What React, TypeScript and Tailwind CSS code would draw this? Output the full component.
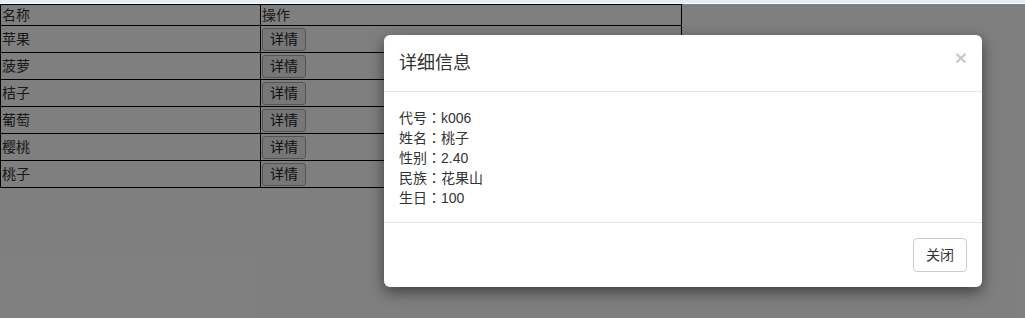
import React from "react";

const fruits = ["苹果", "菠萝", "桔子", "葡萄", "樱桃", "桃子"];

const details = [
  { label: "代号", value: "k006" },
  { label: "姓名", value: "桃子" },
  { label: "性别", value: "2.40" },
  { label: "民族", value: "花果山" },
  { label: "生日", value: "100" },
];

const font = "font-['Liberation_Sans','Noto_Sans_CJK_SC',sans-serif]";

export default function App() {
  return (
    <div className={`w-[1025px] h-[318px] overflow-hidden bg-white text-[14px] leading-[20px] text-[#333] ${font}`}>
      {/* browser strip */}
      <div className="h-[3px] bg-[#e3ebf3]" />

      <div className="relative h-[315px]">
        {/* Fruit table */}
        <table className="border-collapse w-[682px] mt-[1px] bg-white">
          <thead>
            <tr>
              <th className="border border-black p-0 pl-[1px] h-[21px] w-[260px] text-left font-normal">名称</th>
              <th className="border border-black p-0 pl-[1px] h-[21px] text-left font-normal">操作</th>
            </tr>
          </thead>
          <tbody>
            {fruits.map((name) => (
              <tr key={name}>
                <td className="border border-black p-0 pl-[1px] h-[27px]">{name}</td>
                <td className="border border-black p-0 pl-[1px] h-[27px]">
                  <button className="flex items-center justify-center w-[44px] h-[23px] border border-[#a9a9a9] rounded-[3px] bg-[#efefef] text-[14px] text-[#222]">
                    详情
                  </button>
                </td>
              </tr>
            ))}
          </tbody>
        </table>

        {/* Backdrop */}
        <div className="absolute inset-0 bg-black/50" />

        {/* Modal */}
        <div className="absolute left-[384px] top-[31px] w-[598px] bg-white rounded-[6px] shadow-[0_5px_15px_rgba(0,0,0,0.5)]">
          <div className="flex items-start justify-between p-[15px] border-b border-[#e5e5e5]">
            <h4 className="text-[18px] leading-[26px] text-[#333]">详细信息</h4>
            <span className="mt-[-5px] text-[21px] leading-[26px] font-bold text-black opacity-20">×</span>
          </div>
          <div className="p-[15px]">
            {details.map((d) => (
              <div key={d.label} className="h-[20px]">
                {d.label}
                <span className="font-['Noto_Sans_CJK_TC',sans-serif]">：</span>
                {d.value}
              </div>
            ))}
          </div>
          <div className="flex justify-end p-[15px] border-t border-[#e5e5e5]">
            <button className="h-[34px] px-[12px] border border-[#ccc] rounded-[4px] bg-white text-[14px] text-[#333]">
              关闭
            </button>
          </div>
        </div>
      </div>
    </div>
  );
}
